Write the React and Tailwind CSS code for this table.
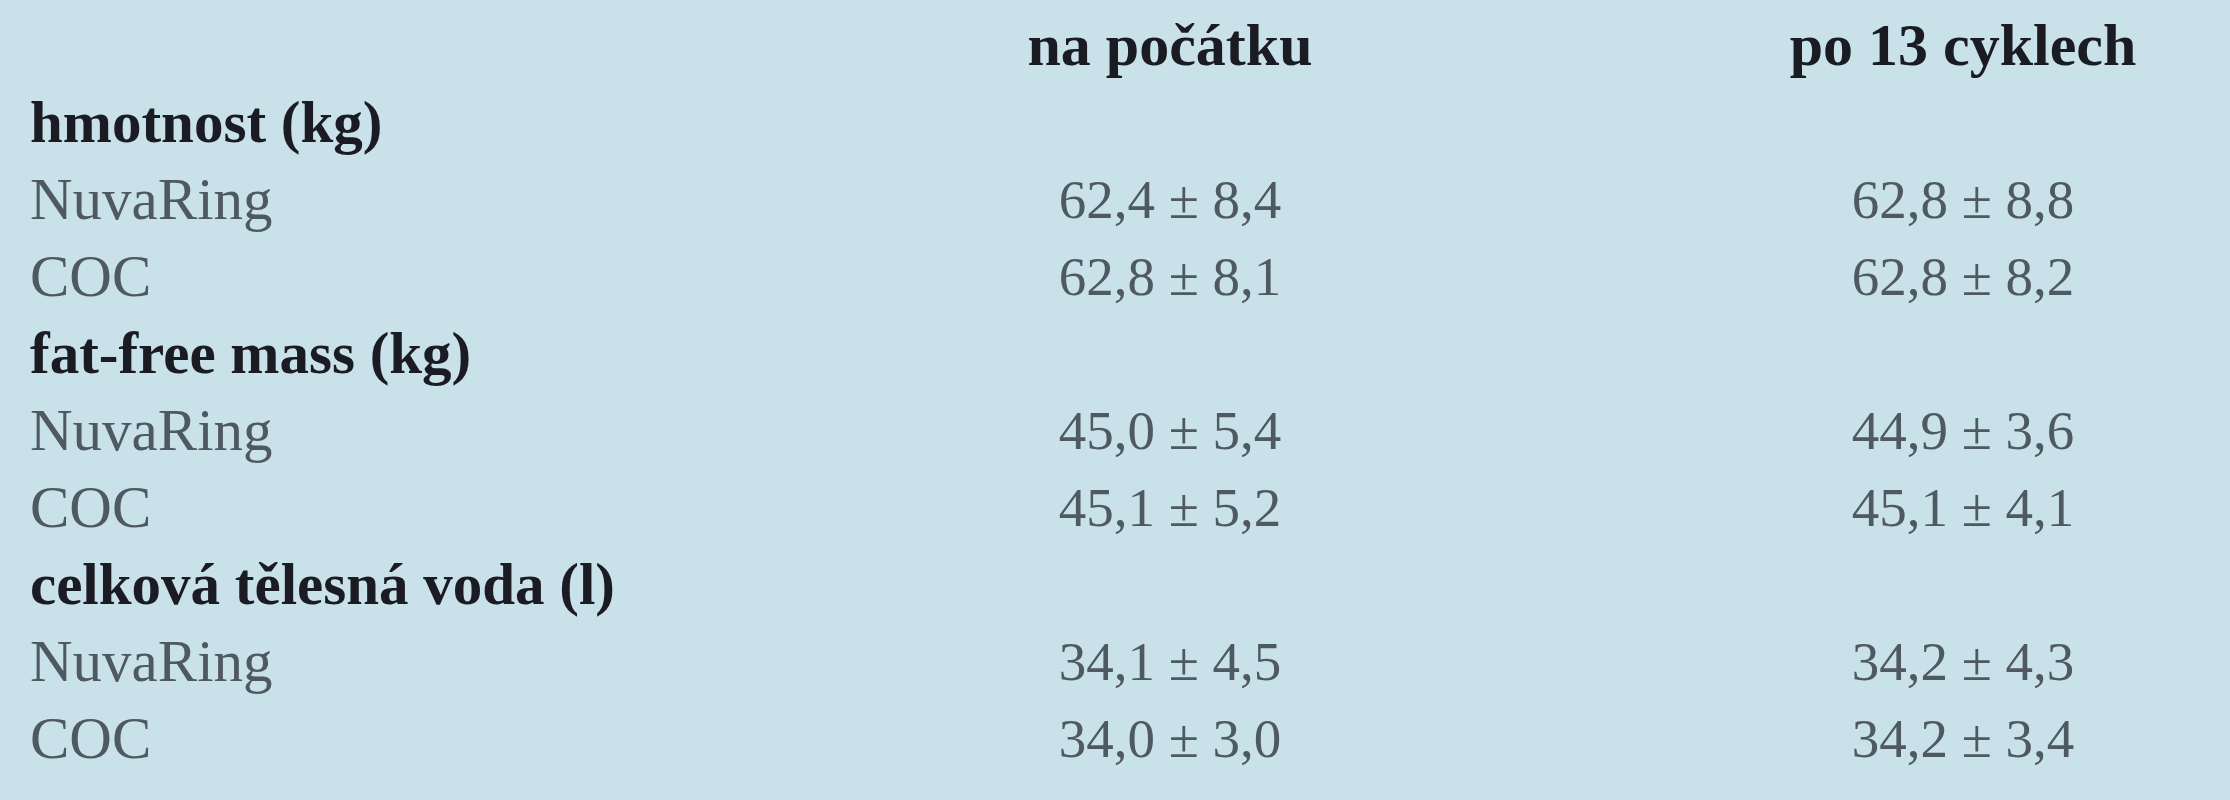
import React from "react";

const rows = [
  { type: "head", label: "hmotnost (kg)" },
  { type: "data", label: "NuvaRing", a: "62,4 ± 8,4", b: "62,8 ± 8,8" },
  { type: "data", label: "COC", a: "62,8 ± 8,1", b: "62,8 ± 8,2" },
  { type: "head", label: "fat-free mass (kg)" },
  { type: "data", label: "NuvaRing", a: "45,0 ± 5,4", b: "44,9 ± 3,6" },
  { type: "data", label: "COC", a: "45,1 ± 5,2", b: "45,1 ± 4,1" },
  { type: "head", label: "celková tělesná voda (l)" },
  { type: "data", label: "NuvaRing", a: "34,1 ± 4,5", b: "34,2 ± 4,3" },
  { type: "data", label: "COC", a: "34,0 ± 3,0", b: "34,2 ± 3,4" },
];

export default function App() {
  return (
    <div
      className="w-[2230px] min-h-[800px] bg-[#c9e1e9] pl-[30px] pt-[7px] overflow-hidden"
      style={{ fontFamily: '"Liberation Serif", "Times New Roman", serif' }}
    >
      <div className="grid grid-cols-[614px_940px_534px] gap-x-[56px] auto-rows-[77px] leading-[77px] whitespace-nowrap">
        <div />
        <div className="text-center font-bold text-[60px] text-[#1b1b24]">na počátku</div>
        <div className="text-center font-bold text-[60px] text-[#1b1b24]">po 13 cyklech</div>
        {rows.map((r, i) =>
          r.type === "head" ? (
            <React.Fragment key={i}>
              <div className="font-bold text-[59px] text-[#1b1b24]">{r.label}</div>
              <div />
              <div />
            </React.Fragment>
          ) : (
            <React.Fragment key={i}>
              <div className="text-[59px] text-[#4f5963]">{r.label}</div>
              <div className="text-center text-[55px] text-[#4f5963]">{r.a}</div>
              <div className="text-center text-[55px] text-[#4f5963]">{r.b}</div>
            </React.Fragment>
          )
        )}
      </div>
    </div>
  );
}
